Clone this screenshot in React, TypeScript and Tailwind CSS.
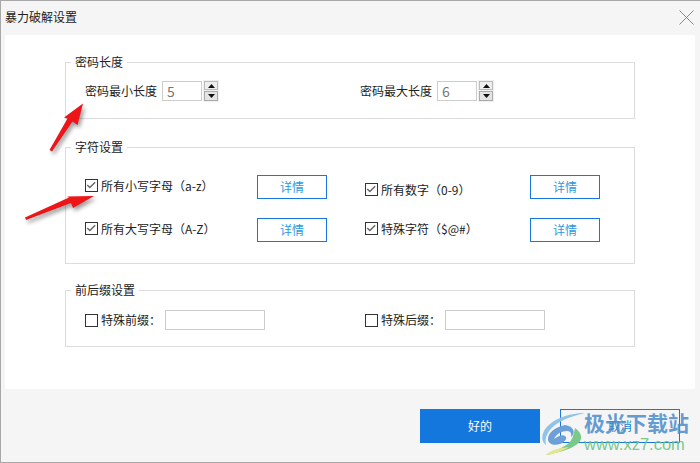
const Check = () => (
  <svg viewBox="0 0 13 13" className="w-[13px] h-[13px] shrink-0 border border-[#333] bg-white">
    <path d="M1.5 5.8 L4.6 8.8 L10.8 2.6" fill="none" stroke="#666" strokeWidth="1.7" />
  </svg>
);

const Empty = () => <div className="w-[13px] h-[13px] shrink-0 border border-[#333] bg-white" />;

const Detail = () => (
  <button className="w-[70px] h-[24px] shrink-0 border border-[#1777df] bg-white text-[12px] text-[#2a9ae0]">详情</button>
);

const Spin = ({ value }: { value: string }) => (
  <div className="flex items-center">
    <div className="w-[40px] h-[20px] border border-[#ccc] bg-white pl-[4px] text-[14px] leading-[18px] text-[#777]">{value}</div>
    <div className="ml-px flex w-[16px] flex-col gap-px bg-[#f0f0f0] p-px">
      <div className="flex h-[9px] items-center justify-center border border-[#bbb] bg-[#eee]">
        <svg viewBox="0 0 7 4" className="w-[7px] h-[4px]"><path d="M3.5 0 L7 4 L0 4 Z" fill="#111" /></svg>
      </div>
      <div className="flex h-[10px] items-center justify-center border border-[#aaa] bg-[#e4e4e4]">
        <svg viewBox="0 0 7 4" className="w-[7px] h-[4px]"><path d="M0 0 L7 0 L3.5 4 Z" fill="#111" /></svg>
      </div>
    </div>
  </div>
);

const Group = ({ title, className, children }: { title: string; className: string; children: React.ReactNode }) => (
  <fieldset className={`border border-[#dcdcdc] ${className}`}>
    <legend className="ml-[5px] px-[4px] text-[12px] leading-[14px] text-[#222]">{title}</legend>
    {children}
  </fieldset>
);

export default function App() {
  return (
    <div className="relative flex h-[463px] w-[700px] flex-col overflow-hidden border-t border-b border-l border-[#a8a8a8] bg-[#f5f5f5] font-['Noto_Sans_CJK_SC',sans-serif] text-[12px] text-[#222]">
      <div className="flex h-[34px] shrink-0 items-center justify-between pl-[4px] pr-[6px]">
        <span className="-mt-[3px] leading-[16px]">暴力破解设置</span>
        <svg viewBox="0 0 15 15" className="w-[15px] h-[15px] -mt-[1px]">
          <path d="M0.5 0.5 L14.5 14.5 M14.5 0.5 L0.5 14.5" stroke="#888" strokeWidth="1" fill="none" />
        </svg>
      </div>

      <div className="ml-[4px] mr-[5px] h-[354px] shrink-0 bg-white pl-[60px] pt-[20px]">
        <Group title="密码长度" className="h-[64px] w-[570px]">
          <div className="flex pl-[19px] pt-[11px]">
            <div className="flex w-[275px] items-center gap-[5px]">
              <span>密码最小长度</span>
              <Spin value="5" />
            </div>
            <div className="flex items-center gap-[5px]">
              <span>密码最大长度</span>
              <Spin value="6" />
            </div>
          </div>
        </Group>

        <Group title="字符设置" className="mt-[21px] h-[124px] w-[570px]">
          <div className="flex flex-col gap-[19px] pl-[19px] pt-[21px]">
            <div className="flex">
              <div className="flex w-[242px] items-center justify-between">
                <div className="mb-[3px] flex items-center gap-[3px]"><Check /><span>所有小写字母（a-z）</span></div>
                <Detail />
              </div>
              <div className="ml-[38px] flex w-[235px] items-center justify-between">
                <div className="mt-[5px] flex items-center gap-[3px]"><Check /><span>所有数字（0-9）</span></div>
                <Detail />
              </div>
            </div>
            <div className="flex">
              <div className="flex w-[242px] items-center justify-between">
                <div className="mb-[3px] flex items-center gap-[3px]"><Check /><span>所有大写字母（A-Z）</span></div>
                <Detail />
              </div>
              <div className="ml-[38px] flex w-[235px] items-center justify-between">
                <div className="mb-[3px] flex items-center gap-[3px]"><Check /><span>特殊字符（$@#）</span></div>
                <Detail />
              </div>
            </div>
          </div>
        </Group>

        <Group title="前后缀设置" className="mt-[19px] h-[64px] w-[570px]">
          <div className="flex pl-[19px] pt-[13px]">
            <div className="flex w-[280px] items-center">
              <Empty />
              <span className="ml-[3px] w-[64px]">特殊前缀：</span>
              <div className="h-[20px] w-[100px] border border-[#ccc] bg-white" />
            </div>
            <div className="flex items-center">
              <Empty />
              <span className="ml-[3px] w-[64px]">特殊后缀：</span>
              <div className="h-[20px] w-[100px] border border-[#ccc] bg-white" />
            </div>
          </div>
        </Group>
      </div>

      <div className="flex flex-1 items-start justify-end gap-[20px] pr-[20px] pt-[20px]">
        <button className="h-[34px] w-[120px] bg-[#1377dd] text-[12px] text-white">好的</button>
        <button className="h-[34px] w-[120px] border border-[#1777df] text-[12px] text-[#1a7fd0]">取消</button>
      </div>

      {/* red annotation arrows */}
      <svg viewBox="0 0 700 463" className="pointer-events-none absolute -left-px -top-px h-[463px] w-[700px] drop-shadow-[2px_3px_2px_rgba(0,0,0,0.4)]">
        <path d="M83 103.5 L77.5 125 L72.5 121.5 L52 151.5 L49.5 150 L67.5 118.5 L64 117.5 Z" fill="#ee1519" />
        <path d="M94 196 L73 208 L71 203 L26 220 L25 217.5 L69 197.5 L67 196.5 Z" fill="#ee1519" />
      </svg>

      {/* watermark */}
      <div className="pointer-events-none absolute left-[540px] top-[411px] flex">
        <svg viewBox="0 0 46 44" className="h-[44px] w-[46px] shrink-0">
          <path d="M44 1 C28 1 10 7 3 19 C0 25 1 30 5 33 C3 26 7 17 17 11 C25 6 35 3 44 1 Z" fill="#8fc3ea" />
          <path d="M24 13 C14 15 7 21 7 27 C7 32 13 34 19 32 C24 30 27 26 24 24 C21 22 16 25 13 27 C15 23 19 19 26 19 C29 19 31 21 30 25 C35 21 33 14 24 13 Z" fill="#6d9fd8" />
          <path d="M34 16 C41 21 43 28 35 33 C28 38 15 41 5 43 C12 38 24 36 29 30 C32 26 33 21 34 16 Z" fill="#79c98a" />
          <path d="M5 43 C10 38 18 36 28 35 C22 39 13 42 5 43 Z" fill="#e6e58a" />
        </svg>
        <div className="-ml-[3px] -mt-[3px] flex flex-col">
          <span className="whitespace-nowrap text-[21px] font-bold leading-[26px] text-[#4a8ccb]/85">极光下载站</span>
          <span className="-mt-[1px] font-['Liberation_Sans',sans-serif] text-[16.5px] leading-[20px] text-[#6cc27f]/90">www.xz7.com</span>
        </div>
      </div>
    </div>
  );
}
